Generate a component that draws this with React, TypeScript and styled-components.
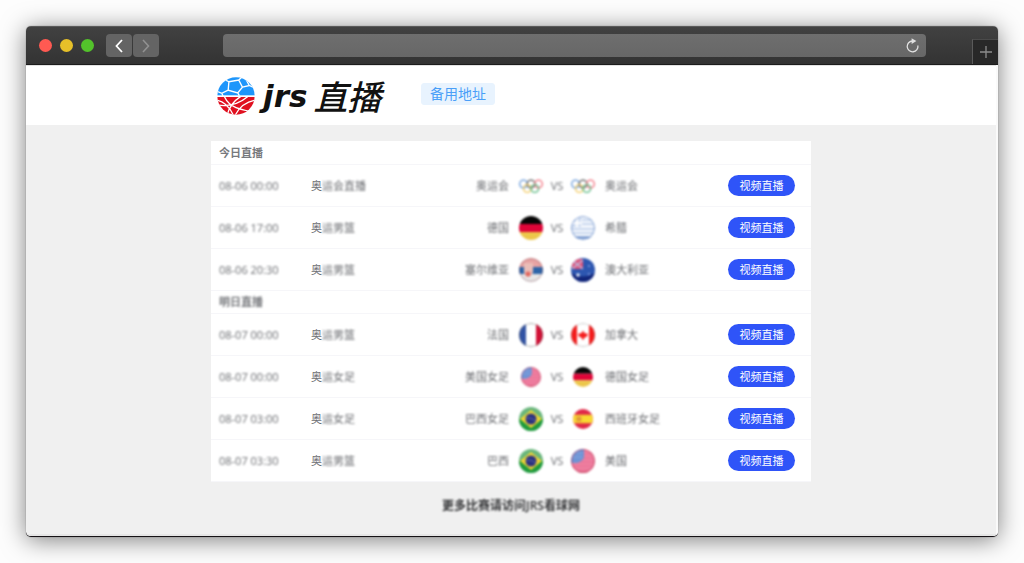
import React from "react";
import styled, { createGlobalStyle, css } from "styled-components";

const GlobalStyle = createGlobalStyle`
  *, *::before, *::after { box-sizing: border-box; }
  body {
    margin: 0;
    background: #fdfdfd;
    font-family: "Open Sans", "Noto Sans CJK SC", sans-serif;
    font-size: 11px;
    line-height: 16px;
    color: #6c6e72;
  }
`;

const Stage = styled.div`
  display: flex;
  min-height: 100vh;
  padding: 26px;
`;

const BrowserWindow = styled.div`
  flex: 1;
  display: flex;
  flex-direction: column;
  overflow: hidden;
  border-radius: 5px;
  border-bottom: 1px solid #161216;
  background: #f0f0f0;
  box-shadow: 0 0 1px rgba(0, 0, 0, 0.6), 0 3px 24px rgba(0, 0, 0, 0.5);
`;

const TitleBar = styled.div`
  display: flex;
  align-items: center;
  height: 39px;
  padding-left: 13px;
  border-top: 1px solid #5a5a5a;
  border-bottom: 1px solid #1c1c1c;
  background: linear-gradient(#414141, #333333);
`;

const Lights = styled.div`
  display: flex;
  gap: 8px;
  margin-right: 12px;
`;

const Light = styled.span<{ $color: string }>`
  width: 13px;
  height: 13px;
  border-radius: 50%;
  background: ${(p) => p.$color};
`;

const NavGroup = styled.div`
  display: flex;
  gap: 1px;
  margin-right: 64px;
`;

const NavButton = styled.button`
  display: flex;
  align-items: center;
  justify-content: center;
  width: 26px;
  height: 23px;
  padding: 0;
  border: 0;
  border-radius: 4px;
  background: #646464;
  color: #ffffff;

  &:disabled { color: #919191; }
`;

const AddressBar = styled.div`
  flex: 1;
  display: flex;
  align-items: center;
  height: 23px;
  margin-right: 46px;
  border-radius: 4px;
  background: linear-gradient(#6e6e6e, #676767);
`;

const AddressInput = styled.input`
  flex: 1;
  min-width: 0;
  height: 100%;
  padding: 0 8px;
  border: 0;
  background: transparent;
  color: #ffffff;
`;

const ReloadButton = styled.button`
  display: flex;
  margin-right: 6px;
  padding: 0;
  border: 0;
  background: transparent;
  color: #e0e0e0;
`;

const NewTabButton = styled.button`
  align-self: flex-end;
  display: flex;
  align-items: center;
  justify-content: center;
  width: 26px;
  height: 25px;
  padding: 0;
  border: 0;
  border-top: 1px solid #4a4a4a;
  border-left: 1px solid #5a5a5a;
  background: #282828;
  color: #8c8c8c;
`;

const Page = styled.div`
  flex: 1;
  display: flex;
  flex-direction: column;
  border-right: 2px solid #fafafa;
  border-bottom: 2px solid #e6e6e6;
`;

const SiteHeader = styled.header`
  border-top: 1px solid #e2e2e2;
  background: #ffffff;
`;

const HeaderInner = styled.div`
  display: flex;
  align-items: center;
  width: 100%;
  max-width: 600px;
  height: 59px;
  margin: 0 auto;
  padding-left: 6px;
`;

const Brand = styled.a`
  display: flex;
  align-items: center;
  width: 168px;
  margin-right: 36px;
  color: #111111;
  text-decoration: none;
  white-space: nowrap;
`;

const BrandLatin = styled.span`
  margin-left: 8px;
  font: italic bold 31px/36px "DejaVu Sans", sans-serif;
`;

const BrandHan = styled.span`
  margin-left: 6px;
  font: italic 500 34px/36px "Noto Sans CJK SC", sans-serif;
`;

const BackupLink = styled.a`
  margin-bottom: 3px;
  padding: 0 8px;
  border: 1px solid #e8f3fe;
  border-radius: 3px;
  background: #e8f3fe;
  color: #4a9ff8;
  font-size: 14px;
  line-height: 20px;
  text-decoration: none;
`;

const Main = styled.main`
  width: 100%;
  max-width: 600px;
  margin: 0 auto;
  padding-top: 16px;
`;

const Schedule = styled.table`
  width: 100%;
  table-layout: fixed;
  border-spacing: 0;
  background: #ffffff;
`;

const blurred = css`
  filter: blur(1px);
`;

const Blur = styled.span`
  display: inline-block;
  ${blurred}
`;

const DayCell = styled.th`
  height: 23px;
  padding: 0 8px;
  border-bottom: 1px solid #f6f6f9;
  color: #77797d;
  font-weight: 700;
  text-align: left;

  thead & { height: 24px; }
`;

const Cell = styled.td<{ $align?: "left" | "center" | "right"; $pad?: number }>`
  height: 42px;
  padding: 0 ${(p) => p.$pad ?? 8}px;
  border-bottom: 1px solid #f6f6f9;
  text-align: ${(p) => p.$align ?? "left"};
  white-space: nowrap;
`;

const FlagIcon = styled.svg<{ $round: boolean }>`
  display: block;
  margin: 0 auto;
  border-radius: ${(p) => (p.$round ? "50%" : "0")};
  ${blurred}
`;

const WatchButton = styled.button`
  display: block;
  width: 67px;
  height: 21px;
  margin-left: auto;
  padding: 0;
  border: 0;
  border-radius: 11px;
  background: #2f54f8;
  color: #ffffff;
  font: inherit;
`;

const Footer = styled.footer`
  padding: 16px 0;
  color: #303133;
  font-size: 12px;
  font-weight: 600;
  text-align: center;
`;

type FlagName =
  | "olympic" | "germany" | "greece" | "serbia" | "australia"
  | "france" | "canada" | "usa" | "brazil" | "spain";

const flags: Record<FlagName, React.ReactNode> = {
  olympic: (
    <g fill="none" strokeWidth="1.3" opacity=".8">
      <circle cx="4.5" cy="10" r="3.8" stroke="#3f7fd0" />
      <circle cx="12" cy="10" r="3.8" stroke="#333333" />
      <circle cx="19.5" cy="10" r="3.8" stroke="#ee4b5c" />
      <circle cx="8.3" cy="14.5" r="3.8" stroke="#f0bd3a" />
      <circle cx="15.8" cy="14.5" r="3.8" stroke="#32a764" />
    </g>
  ),
  germany: (
    <>
      <rect width="24" height="8" fill="#050505" />
      <rect y="8" width="24" height="8" fill="#de0538" />
      <rect y="16" width="24" height="8" fill="#ecc64a" />
    </>
  ),
  greece: (
    <>
      <rect width="24" height="24" fill="#f4f7fc" />
      <path d="M11 4h13M11 8h13M0 13h24M0 17h24" stroke="#b9cdea" strokeWidth="1.6" />
      <path d="M3 21.500h18" stroke="#5f86c6" strokeWidth="2" />
      <path d="M0 0h10v11H0z" fill="#cfdcf1" />
      <path d="M6 0v11M0 7h10" stroke="#ffffff" strokeWidth="2" />
      <circle cx="12" cy="12" r="11.5" fill="none" stroke="#7f9dd0" />
    </>
  ),
  serbia: (
    <>
      <rect width="24" height="9" fill="#e8a3a3" />
      <rect y="9" width="24" height="7" fill="#2c64a8" />
      <rect y="16" width="24" height="8" fill="#e6e6e6" />
      <path d="M5 5h9v9q-1 4-5 5-4-2-4-5z" fill="#e9bdb8" />
      <circle cx="9" cy="16" r="2.6" fill="#e0685f" />
      <circle cx="12" cy="12" r="11.4" fill="none" stroke="#8d5560" strokeOpacity=".5" />
    </>
  ),
  australia: (
    <>
      <rect width="24" height="24" fill="#2d56b0" />
      <path d="M0 15q12 7 24 0v9H0z" fill="#12267a" />
      <path d="M1 1h11v10H1z" fill="#e0557a" />
      <path d="M1 2l11 9M12 2L1 11" stroke="#b7bfe6" strokeWidth="1.2" />
      <circle cx="7" cy="17" r="1.8" fill="#e5ecfb" />
      <circle cx="18" cy="8" r="1" fill="#88a8e8" />
      <circle cx="18" cy="16" r="1" fill="#88a0e0" />
    </>
  ),
  france: (
    <>
      <rect width="24" height="24" fill="#ffffff" />
      <rect width="7" height="24" fill="#3153a4" />
      <rect x="17" width="7" height="24" fill="#d21136" />
      <circle cx="12" cy="12" r="11.6" fill="none" stroke="#555555" strokeOpacity=".5" />
    </>
  ),
  canada: (
    <>
      <rect width="24" height="24" fill="#ffffff" />
      <path d="M0 0h6v24H0zM18 0h6v24h-6z" fill="#f51c1c" />
      <path d="M12 7.500l1.500 2.500 3.500 1-1 2.500-3 1.500v1.500h-2V15l-3-1.500-1-2.500 3.500-1z" fill="#f51c1c" />
      <circle cx="12" cy="12" r="11.6" fill="none" stroke="#777777" strokeOpacity=".4" />
    </>
  ),
  usa: (
    <>
      <rect width="24" height="24" fill="#ec7699" />
      <path d="M12 3h12M12 7h12M12 11h12M0 15h24M0 19h24" stroke="#f08aa8" />
      <path d="M0 0h13v8q-1 4-7 6H0z" fill="#6e94d6" />
      <path d="M3 4h8M3 8h8" stroke="#aec3eb" strokeDasharray="1 2" />
      <circle cx="12" cy="12" r="11.5" fill="none" stroke="#b03048" strokeOpacity=".6" />
      <path d="M4 22q8 3 16 0v2H4z" fill="#c0304e" />
    </>
  ),
  brazil: (
    <>
      <rect width="24" height="24" fill="#69b67c" />
      <rect y="12" width="24" height="12" fill="#1e9a3c" />
      <path d="M12 3l11 9-11 9L1 12z" fill="#f0d435" />
      <circle cx="12" cy="12" r="5.5" fill="#2c3280" />
      <path d="M7 11q5-1 10 3" fill="none" stroke="#5d68a8" />
    </>
  ),
  spain: (
    <>
      <rect width="24" height="24" fill="#e02a48" />
      <rect y="7" width="24" height="10" fill="#f8d932" />
      <path d="M4 9h6v6H4z" fill="#e09a3a" />
    </>
  ),
};

function Flag({ name, size = 24 }: { name: FlagName; size?: number }) {
  return (
    <FlagIcon $round={name !== "olympic"} width={size} height={size} viewBox="0 0 24 24" aria-hidden="true">
      {flags[name]}
    </FlagIcon>
  );
}

function BallLogo() {
  return (
    <svg width="38" height="38" viewBox="0 0 112 112" aria-hidden="true">
      <defs>
        <clipPath id="ball"><circle cx="56" cy="56" r="55" /></clipPath>
      </defs>
      <g clipPath="url(#ball)" fill="none" stroke="#ffffff" strokeWidth="4">
        <rect width="112" height="54" fill="#1e96fb" stroke="none" />
        <rect y="59" width="112" height="53" fill="#e01020" stroke="none" />
        <path d="M35 14L64 9l11 21-14 17-28-8zM35 14L20 6M64 9l10-9M75 30l20-5 14 6M95 25L86 8M61 47l5 8M33 39L14 48 0 42M14 48l4 8M95 25" />
        <path d="M0 82Q50 92 92 57M22 58q10 22 34 32t50 10M70 57Q38 78 30 112M112 68Q72 76 54 112M0 68q30 6 48 44" />
      </g>
    </svg>
  );
}

interface Match {
  time: string;
  league: string;
  home: string;
  homeFlag: FlagName;
  homeSize?: number;
  away: string;
  awayFlag: FlagName;
  awaySize?: number;
}

const today: Match[] = [
  { time: "08-06 00:00", league: "奥运会直播", home: "奥运会", homeFlag: "olympic", away: "奥运会", awayFlag: "olympic" },
  { time: "08-06 17:00", league: "奥运男篮", home: "德国", homeFlag: "germany", away: "希腊", awayFlag: "greece" },
  { time: "08-06 20:30", league: "奥运男篮", home: "塞尔维亚", homeFlag: "serbia", away: "澳大利亚", awayFlag: "australia" },
];

const tomorrow: Match[] = [
  { time: "08-07 00:00", league: "奥运男篮", home: "法国", homeFlag: "france", away: "加拿大", awayFlag: "canada" },
  { time: "08-07 00:00", league: "奥运女足", home: "美国女足", homeFlag: "usa", homeSize: 20, away: "德国女足", awayFlag: "germany", awaySize: 20 },
  { time: "08-07 03:00", league: "奥运女足", home: "巴西女足", homeFlag: "brazil", away: "西班牙女足", awayFlag: "spain", awaySize: 20 },
  { time: "08-07 03:30", league: "奥运男篮", home: "巴西", homeFlag: "brazil", away: "美国", awayFlag: "usa" },
];

const columnWidths = [92, 106, 108, 28, 24, 28, 114, 100];

function MatchRow({ match }: { match: Match }) {
  return (
    <tr>
      <Cell><Blur>{match.time}</Blur></Cell>
      <Cell>{match.league[0]}<Blur>{match.league.slice(1)}</Blur></Cell>
      <Cell $align="right"><Blur>{match.home}</Blur></Cell>
      <Cell $pad={0}><Flag name={match.homeFlag} size={match.homeSize} /></Cell>
      <Cell $pad={0} $align="center"><Blur>VS</Blur></Cell>
      <Cell $pad={0}><Flag name={match.awayFlag} size={match.awaySize} /></Cell>
      <Cell><Blur>{match.away}</Blur></Cell>
      <Cell $pad={16}><WatchButton type="button">视频直播</WatchButton></Cell>
    </tr>
  );
}

export default function App() {
  return (
    <>
      <GlobalStyle />
      <Stage>
        <BrowserWindow>
          <TitleBar>
            <Lights>
              <Light $color="#ff5a52" />
              <Light $color="#e6c029" />
              <Light $color="#53c22b" />
            </Lights>
            <NavGroup>
              <NavButton type="button" aria-label="Back">
                <svg width="8" height="14" viewBox="0 0 8 14" fill="none" stroke="currentColor" strokeWidth="1.8">
                  <path d="M7 1L1.500 7 7 13" />
                </svg>
              </NavButton>
              <NavButton type="button" aria-label="Forward" disabled>
                <svg width="8" height="14" viewBox="0 0 8 14" fill="none" stroke="currentColor" strokeWidth="1.6">
                  <path d="M1 1l5.500 6L1 13" />
                </svg>
              </NavButton>
            </NavGroup>
            <AddressBar>
              <AddressInput type="text" aria-label="Address" />
              <ReloadButton type="button" aria-label="Reload">
                <svg width="15" height="15" viewBox="0 0 15 15" fill="none" stroke="currentColor" strokeWidth="1.3">
                  <path d="M12.900 7.500A5.400 5.400 0 1 1 7.500 3" />
                  <path d="M6.600 .2L11.400 3 6.600 6z" fill="currentColor" stroke="none" />
                </svg>
              </ReloadButton>
            </AddressBar>
            <NewTabButton type="button" aria-label="New tab">
              <svg width="12" height="12" viewBox="0 0 12 12" stroke="currentColor" strokeWidth="1.3">
                <path d="M6 0v12M0 6h12" />
              </svg>
            </NewTabButton>
          </TitleBar>
          <Page>
            <SiteHeader>
              <HeaderInner>
                <Brand href="#">
                  <BallLogo />
                  <BrandLatin>jrs</BrandLatin>
                  <BrandHan>直播</BrandHan>
                </Brand>
                <BackupLink href="#">备用地址</BackupLink>
              </HeaderInner>
            </SiteHeader>
            <Main>
              <Schedule>
                <colgroup>
                  {columnWidths.map((w, i) => <col key={i} width={w} />)}
                </colgroup>
                <thead>
                  <tr><DayCell colSpan={columnWidths.length}>今日直播</DayCell></tr>
                </thead>
                <tbody>
                  {today.map((m) => <MatchRow key={m.time + m.home} match={m} />)}
                </tbody>
                <tbody>
                  <tr>
                    <DayCell colSpan={columnWidths.length} scope="rowgroup"><Blur>明日直播</Blur></DayCell>
                  </tr>
                  {tomorrow.map((m) => <MatchRow key={m.time + m.home} match={m} />)}
                </tbody>
              </Schedule>
              <Footer><Blur>更多比赛请访问JRS看球网</Blur></Footer>
            </Main>
          </Page>
        </BrowserWindow>
      </Stage>
    </>
  );
}
